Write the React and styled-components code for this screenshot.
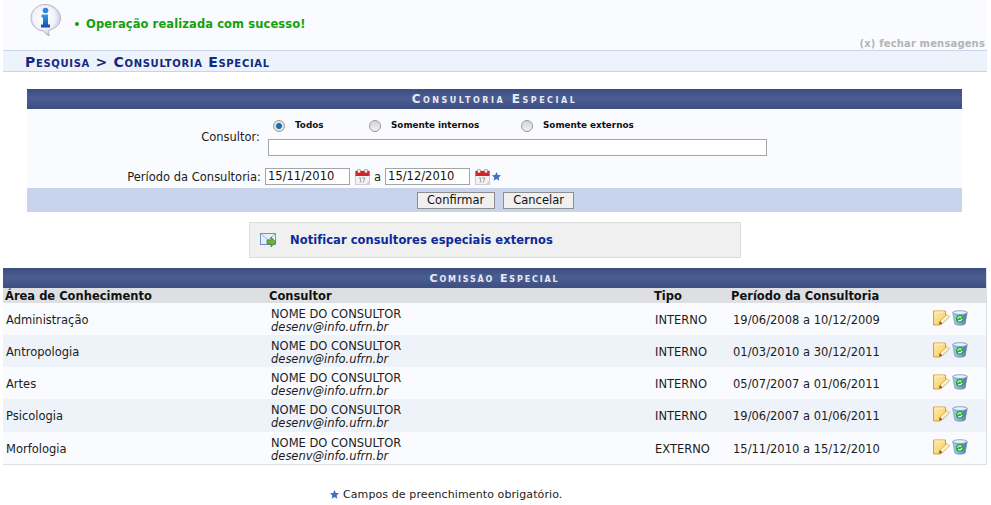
import styled, { createGlobalStyle } from "styled-components";

const GlobalStyle = createGlobalStyle`
    html, body {
        margin: 0;
        padding: 0;
        background: #fff;
    }
    body {
        font-family: "DejaVu Sans", Verdana, sans-serif;
        font-size: 11.5px;
        color: #1c1c1c;
    }
`;

const rows = [
    { area: "Administração", tipo: "INTERNO", periodo: "19/06/2008 a 10/12/2009" },
    { area: "Antropologia", tipo: "INTERNO", periodo: "01/03/2010 a 30/12/2011" },
    { area: "Artes", tipo: "INTERNO", periodo: "05/07/2007 a 01/06/2011" },
    { area: "Psicologia", tipo: "INTERNO", periodo: "19/06/2007 a 01/06/2011" },
    { area: "Morfologia", tipo: "EXTERNO", periodo: "15/11/2010 a 15/12/2010" },
];

const InfoIcon = () => (
    <svg width="32" height="34" viewBox="0 0 32 34">
        <defs>
            <radialGradient id="bubble" cx="45%" cy="42%" r="60%">
                <stop offset="0" stopColor="#ffffff" />
                <stop offset="0.6" stopColor="#f2f3fb" />
                <stop offset="0.88" stopColor="#cfd0e6" />
                <stop offset="1" stopColor="#a8a8bc" />
            </radialGradient>
            <linearGradient id="infoBlue" x1="0" y1="0" x2="0" y2="1">
                <stop offset="0" stopColor="#3a9ae8" />
                <stop offset="1" stopColor="#0f4fa8" />
            </linearGradient>
        </defs>
        <path d="M15 1.500C7.500 1.500 1 7.500 1 15c0 7 5.500 12.500 12.500 13 1.500 2 2.500 4 6 4.800-1-1.800-1-3.500-.6-5.400C26 25.500 30.500 21 30.500 15 30.500 7.500 23 1.500 15 1.500z" fill="url(#bubble)" stroke="#b7b7ca" strokeWidth="1" />
        <circle cx="15.500" cy="7.500" r="2.800" fill="#2c86dc" />
        <path d="M11.500 11.500h6.500v10h2v3h-9v-3h2v-7h-1.500z" fill="url(#infoBlue)" />
    </svg>
);

const CalendarIcon = () => (
    <svg width="15" height="16" viewBox="0 0 15 16">
        <rect x="0.500" y="2" width="14" height="13.500" fill="#f3f3f3" stroke="#cdcdcd" />
        <rect x="0.500" y="2" width="14" height="5" fill="#d5232a" />
        <rect x="2.500" y="0.500" width="3" height="3.500" rx="1" fill="#ececec" stroke="#a33" strokeWidth="0.500" />
        <rect x="9.500" y="0.500" width="3" height="3.500" rx="1" fill="#ececec" stroke="#a33" strokeWidth="0.500" />
        <path d="M4 9h1.400v4.500M7 9h3L8 13.500" fill="none" stroke="#9c9c9c" strokeWidth="1" />
        <path d="M10.500 15.500l4-4v4z" fill="#d2d2d2" />
    </svg>
);

const StarIcon = () => (
    <svg width="9" height="9" viewBox="0 0 10 10">
        <path d="M5 0l1.500 3.300 3.500.4-2.600 2.400.7 3.600L5 7.900 1.900 9.700l.7-3.600L0 3.700l3.500-.4z" fill="#3f6fc8" />
    </svg>
);

const MailIcon = () => (
    <svg width="17" height="15" viewBox="0 0 17 15">
        <rect x="0.500" y="0.500" width="15" height="11" fill="#e6eefa" stroke="#6f93c8" />
        <path d="M1 1l7 6 7-6" fill="none" stroke="#8fb0dc" />
        <path d="M7 7h4V4l5 5-5 5v-3H7z" fill="#6fb23a" stroke="#3f7d20" strokeWidth="0.700" />
    </svg>
);

const EditIcon = () => (
    <svg width="17" height="16" viewBox="0 0 17 16">
        <defs>
            <linearGradient id="note" x1="0" y1="0" x2="1" y2="1">
                <stop offset="0" stopColor="#fde9a8" />
                <stop offset="1" stopColor="#f7cf63" />
            </linearGradient>
        </defs>
        <path d="M0.500 1h12v7.500l-5 6.500h-7z" fill="url(#note)" stroke="#e09a3a" />
        <path d="M1.500 2h10" stroke="#fff3cf" />
        <path d="M6 14.500l1-3.500 7-6.500 2.500 2.500-7 6.500z" fill="#fbf3cb" stroke="#c9a24e" strokeWidth="0.800" />
        <path d="M6 14.500l1-3.500 2.500 2.500z" fill="#8a5a1e" />
    </svg>
);

const TrashIcon = () => (
    <svg width="16" height="16" viewBox="0 0 16 16">
        <defs>
            <linearGradient id="bucket" x1="0" y1="0" x2="1" y2="0">
                <stop offset="0" stopColor="#9fd0f2" />
                <stop offset="0.6" stopColor="#6ea9dc" />
                <stop offset="1" stopColor="#456a9c" />
            </linearGradient>
        </defs>
        <path d="M0.800 2.500l2 11.500c2 1.700 8.400 1.700 10.400 0l2-11.500z" fill="url(#bucket)" stroke="#7f97b4" strokeWidth="0.700" />
        <ellipse cx="8" cy="2.600" rx="7.200" ry="1.900" fill="#e6f2fb" stroke="#5f86b4" strokeWidth="0.700" />
        <circle cx="7.800" cy="8.800" r="3.900" fill="#36a33a" />
        <path d="M5.800 8.800a2 2 0 0 1 3.500-1.300M9.800 8.800a2 2 0 0 1-3.500 1.300" fill="none" stroke="#eefbe6" strokeWidth="1.200" />
    </svg>
);

const App = () => (
    <>
        <GlobalStyle />
        <Page>
            <MessageBox>
                <InfoWrap><InfoIcon /></InfoWrap>
                <SuccessText>
                    <Bullet />
                    Operação realizada com sucesso!
                </SuccessText>
                <CloseMessages>(x) fechar mensagens</CloseMessages>
            </MessageBox>
            <Breadcrumb>Pesquisa &gt; Consultoria Especial</Breadcrumb>

            <FormPanel>
                <Caption>Consultoria Especial</Caption>
                <FormBody>
                    <FormRow>
                        <FieldLabel $offset={12}>Consultor:</FieldLabel>
                        <FieldColumn>
                            <RadioRow>
                                <RadioOption $width={96}><Radio $checked />Todos</RadioOption>
                                <RadioOption $width={152}><Radio />Somente internos</RadioOption>
                                <RadioOption><Radio />Somente externos</RadioOption>
                            </RadioRow>
                            <WideInput />
                        </FieldColumn>
                    </FormRow>
                    <DateRow>
                        <FieldLabel $width={233}>Período da Consultoria:</FieldLabel>
                        <DateInput>15/11/2010</DateInput>
                        <CalendarIcon />
                        <span>a</span>
                        <DateInput>15/12/2010</DateInput>
                        <CalendarIcon />
                        <StarIcon />
                    </DateRow>
                </FormBody>
                <ButtonBar>
                    <Button>Confirmar</Button>
                    <Button>Cancelar</Button>
                </ButtonBar>
            </FormPanel>

            <NotifyBox>
                <MailIcon />
                <NotifyLink>Notificar consultores especiais externos</NotifyLink>
            </NotifyBox>

            <ListTable>
                <ListCaption>Comissão Especial</ListCaption>
                <HeadRow>
                    <span>Área de Conhecimento</span>
                    <span>Consultor</span>
                    <span>Tipo</span>
                    <span>Período da Consultoria</span>
                </HeadRow>
                {rows.map((row, i) => (
                    <DataRow key={row.area} $odd={i % 2 === 1}>
                        <div>{row.area}</div>
                        <ConsultorCell>
                            NOME DO CONSULTOR
                            <em>desenv@info.ufrn.br</em>
                        </ConsultorCell>
                        <div>{row.tipo}</div>
                        <div>{row.periodo}</div>
                        <IconsCell>
                            <EditIcon />
                            <TrashIcon />
                        </IconsCell>
                    </DataRow>
                ))}
            </ListTable>

            <Required>
                <StarIcon />
                Campos de preenchimento obrigatório.
            </Required>
        </Page>
    </>
);

const Page = styled.div`
    width: 984px;
    margin-left: 3px;
    height: 505px;
    overflow: hidden;
`;

const MessageBox = styled.div`
    position: relative;
    height: 50px;
    box-sizing: border-box;
    padding: 3px 0 0 27px;
    background: #f9fbfe;
    display: flex;
    align-items: flex-start;
`;

const InfoWrap = styled.div`
    width: 45px;
    flex: none;
`;

const SuccessText = styled.div`
    margin-top: 14px;
    display: flex;
    align-items: center;
    color: #13a10e;
    font-weight: bold;
    letter-spacing: 0.1px;
`;

const Bullet = styled.i`
    width: 4px;
    height: 4px;
    border-radius: 50%;
    background: #1a9a12;
    margin-right: 7px;
`;

const CloseMessages = styled.span`
    position: absolute;
    right: 2px;
    bottom: 1px;
    color: #b4b4b4;
    font-weight: bold;
    font-size: 10px;
    letter-spacing: 0.15px;
`;

const Breadcrumb = styled.div`
    height: 20px;
    line-height: 22px;
    padding-left: 22px;
    background: #eef2fb;
    border-top: 1px solid #c8d4ec;
    border-bottom: 1px solid #c8d4ec;
    color: #0f2a80;
    font-weight: bold;
    font-size: 14px;
    letter-spacing: 0.68px;
    font-variant: small-caps;
`;

const FormPanel = styled.div`
    width: 935px;
    margin: 17px 0 0 24px;
    background: #f9fbfe;
`;

const Caption = styled.div`
    height: 20px;
    line-height: 21px;
    text-align: center;
    color: #e8ebf4;
    font-weight: bold;
    font-size: 12px;
    font-variant: small-caps;
    letter-spacing: 2.5px;
    background: linear-gradient(#3c4d80, #4b5e91 45%, #3d4e82);
`;

const FormBody = styled.div`
    height: 79px;
    box-sizing: border-box;
    padding-top: 9px;
`;

const FormRow = styled.div`
    display: flex;
    align-items: flex-start;
`;

const FieldLabel = styled.div`
    width: ${(p) => p.$width || 233}px;
    flex: none;
    text-align: right;
    margin-top: ${(p) => p.$offset || 0}px;
`;

const FieldColumn = styled.div`
    margin-left: 8px;
`;

const RadioRow = styled.div`
    display: flex;
    height: 21px;
    padding-left: 5px;
`;

const RadioOption = styled.label`
    display: flex;
    align-items: flex-start;
    width: ${(p) => (p.$width ? `${p.$width}px` : "auto")};
    padding-top: 2px;
    font-size: 8.8px;
    line-height: 11px;
    font-weight: bold;
    color: #111;
`;

const Radio = styled.span`
    width: 10px;
    height: 10px;
    margin: 0 10px 0 0;
    border-radius: 50%;
    border: 1px solid #9a9a9a;
    background: ${(p) =>
        p.$checked
            ? "radial-gradient(circle, #1a6fb0 0 2.5px, #e4e4e4 3.5px)"
            : "linear-gradient(#d4d4d4, #f1f1f1)"};
`;

const WideInput = styled.div`
    width: 497px;
    height: 15px;
    background: #fff;
    border: 1px solid #a5a5a5;
`;

const DateRow = styled.div`
    display: flex;
    align-items: center;
    margin-top: 11px;
    padding-left: 1px;
    height: 19px;
    gap: 4px;

    & > svg {
        margin-left: 1px;
    }

    & > svg:last-child {
        margin-left: -2px;
    }
`;

const DateInput = styled.div`
    width: 81px;
    height: 15px;
    line-height: 15px;
    padding-left: 2px;
    background: #fff;
    border: 1px solid #a5a5a5;
    color: #111;
`;

const ButtonBar = styled.div`
    height: 24px;
    display: flex;
    justify-content: center;
    align-items: center;
    gap: 8px;
    padding-left: 2px;
    background: #c8d4ec;
`;

const Button = styled.div`
    height: 15px;
    line-height: 15px;
    padding: 0 9.5px;
    background: #f0f0f0;
    border: 1px solid #8e8e8e;
    color: #111;
`;

const NotifyBox = styled.div`
    width: 480px;
    height: 34px;
    margin: 10px 0 0 246px;
    display: flex;
    align-items: center;
    gap: 13px;
    padding-left: 10px;
    background: #f0f0f0;
    border: 1px solid #dcdcdc;
`;

const NotifyLink = styled.span`
    color: #0b2a9a;
    font-weight: bold;
    letter-spacing: 0.05px;
`;

const ListTable = styled.div`
    margin-top: 10px;
    border-bottom: 1px solid #dcdfe6;
    border-right: 1px solid #dcdfe6;
`;

const ListCaption = styled(Caption)`
    font-size: 11px;
    letter-spacing: 1.85px;
`;

const HeadRow = styled.div`
    height: 15px;
    line-height: 16px;
    display: grid;
    grid-template-columns: 264px 385px 77px 1fr;
    padding-left: 2px;
    background: #dedfe3;
    color: #111;
    font-weight: bold;
`;

const DataRow = styled.div`
    height: 32px;
    box-sizing: border-box;
    display: grid;
    grid-template-columns: 265px 384px 78px 200px 1fr;
    align-items: center;
    padding: 2px 0 0 3px;
    background: ${(p) => (p.$odd ? "#eef2f9" : "#f9fbfe")};

    &:nth-child(6) {
        height: 33px;
        padding-top: 1px;
    }
`;

const ConsultorCell = styled.div`
    line-height: 13px;
    padding-top: 2px;

    em {
        display: block;
    }
`;

const IconsCell = styled.div`
    display: flex;
    gap: 2px;
    align-items: center;
    padding-bottom: 4px;
`;

const Required = styled.div`
    margin-top: 23px;
    padding-left: 327px;
    display: flex;
    align-items: center;
    gap: 4px;
    font-size: 11px;
    letter-spacing: 0.1px;
`;

export default App;
